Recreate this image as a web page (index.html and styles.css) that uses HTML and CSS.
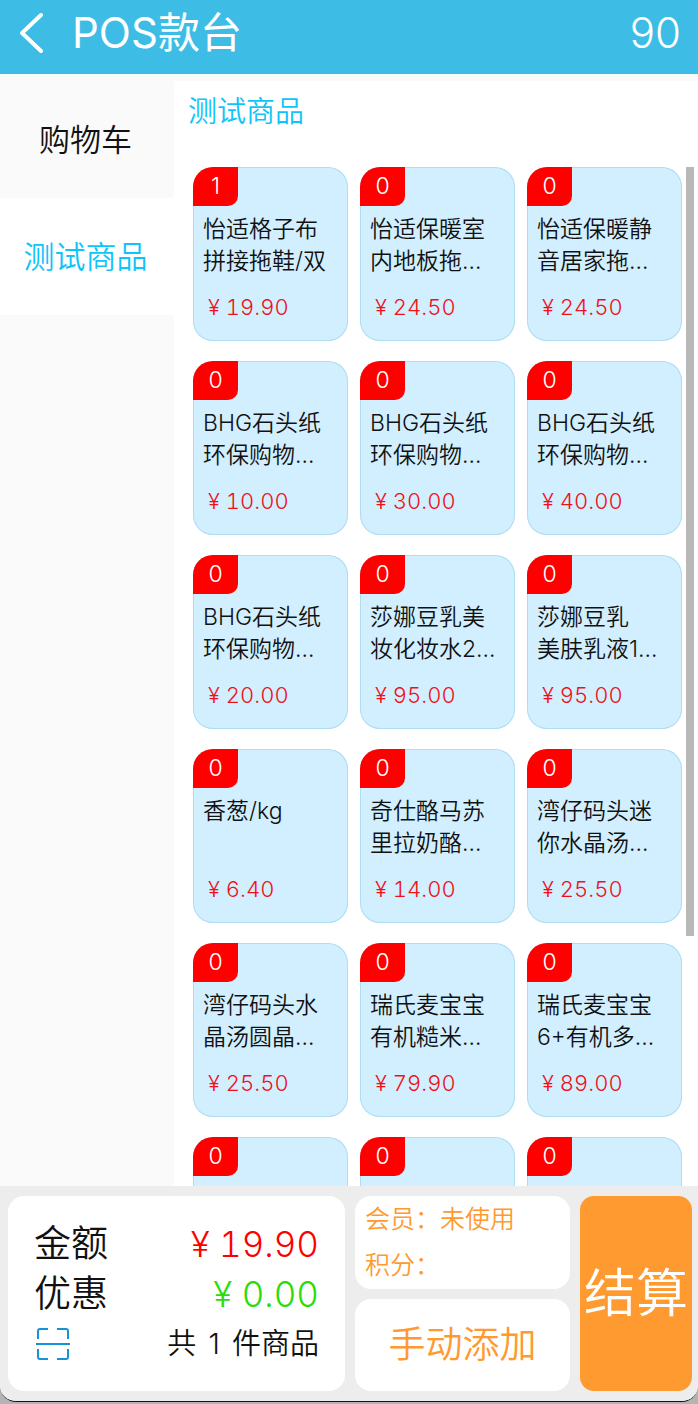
FILE: index.html
```
<!DOCTYPE html>
<html lang="zh-CN">
<head>
    <meta charset="UTF-8">
    <meta name="viewport" content="width=device-width, initial-scale=1.0">
    <title>POS款台</title>
    <link rel="stylesheet" href="styles.css">
</head>
<body>
    <div class="app">
        <header class="header">
            <button class="back-btn" type="button" aria-label="返回">
                <svg width="24" height="42" viewBox="0 0 24 42" fill="none" stroke="#fff" stroke-width="4" stroke-linecap="round">
                    <path d="M21 3 L2 21 L21 39"/>
                </svg>
            </button>
            <h1>POS款台</h1>
            <span class="header-count">90</span>
        </header>

        <div class="content">
            <nav class="sidebar">
                <button class="tab" type="button">购物车</button>
                <button class="tab active" type="button">测试商品</button>
            </nav>

            <main class="goods">
                <h2>测试商品</h2>
                <div class="goods-scroll">
                    <div class="goods-list">
                        <button class="card" type="button">
                            <span class="num">1</span>
                            <span class="name">怡适格子布<br>拼接拖鞋/双</span>
                            <span class="price">¥ 19.90</span>
                        </button>
                        <button class="card" type="button">
                            <span class="num">0</span>
                            <span class="name">怡适保暖室<br>内地板拖…</span>
                            <span class="price">¥ 24.50</span>
                        </button>
                        <button class="card" type="button">
                            <span class="num">0</span>
                            <span class="name">怡适保暖静<br>音居家拖…</span>
                            <span class="price">¥ 24.50</span>
                        </button>
                        <button class="card" type="button">
                            <span class="num">0</span>
                            <span class="name">BHG石头纸<br>环保购物…</span>
                            <span class="price">¥ 10.00</span>
                        </button>
                        <button class="card" type="button">
                            <span class="num">0</span>
                            <span class="name">BHG石头纸<br>环保购物…</span>
                            <span class="price">¥ 30.00</span>
                        </button>
                        <button class="card" type="button">
                            <span class="num">0</span>
                            <span class="name">BHG石头纸<br>环保购物…</span>
                            <span class="price">¥ 40.00</span>
                        </button>
                        <button class="card" type="button">
                            <span class="num">0</span>
                            <span class="name">BHG石头纸<br>环保购物…</span>
                            <span class="price">¥ 20.00</span>
                        </button>
                        <button class="card" type="button">
                            <span class="num">0</span>
                            <span class="name">莎娜豆乳美<br>妆化妆水2…</span>
                            <span class="price">¥ 95.00</span>
                        </button>
                        <button class="card" type="button">
                            <span class="num">0</span>
                            <span class="name">莎娜豆乳<br>美肤乳液1…</span>
                            <span class="price">¥ 95.00</span>
                        </button>
                        <button class="card" type="button">
                            <span class="num">0</span>
                            <span class="name">香葱/kg</span>
                            <span class="price">¥ 6.40</span>
                        </button>
                        <button class="card" type="button">
                            <span class="num">0</span>
                            <span class="name">奇仕酪马苏<br>里拉奶酪…</span>
                            <span class="price">¥ 14.00</span>
                        </button>
                        <button class="card" type="button">
                            <span class="num">0</span>
                            <span class="name">湾仔码头迷<br>你水晶汤…</span>
                            <span class="price">¥ 25.50</span>
                        </button>
                        <button class="card" type="button">
                            <span class="num">0</span>
                            <span class="name">湾仔码头水<br>晶汤圆晶…</span>
                            <span class="price">¥ 25.50</span>
                        </button>
                        <button class="card" type="button">
                            <span class="num">0</span>
                            <span class="name">瑞氏麦宝宝<br>有机糙米…</span>
                            <span class="price">¥ 79.90</span>
                        </button>
                        <button class="card" type="button">
                            <span class="num">0</span>
                            <span class="name">瑞氏麦宝宝<br>6+有机多…</span>
                            <span class="price">¥ 89.00</span>
                        </button>
                        <button class="card" type="button"><span class="num">0</span></button>
                        <button class="card" type="button"><span class="num">0</span></button>
                        <button class="card" type="button"><span class="num">0</span></button>
                    </div>
                    <div class="scroll-thumb"></div>
                </div>
            </main>
        </div>

        <footer class="footer">
            <section class="panel total">
                <div class="row">
                    <span>金额</span>
                    <span class="amount">¥ 19.90</span>
                </div>
                <div class="row">
                    <span>优惠</span>
                    <span class="amount discount">¥ 0.00</span>
                </div>
                <div class="row small">
                    <button class="scan-btn" type="button" aria-label="扫码">
                        <svg width="34" height="34" viewBox="0 0 34 34" fill="none" stroke="#1593d8" stroke-width="2">
                            <path d="M2 12 V4 Q2 2 4 2 H12 M21 2 H30 Q32 2 32 4 V12 M2 22 V30 Q2 32 4 32 H12 M21 32 H30 Q32 32 32 30 V22 M0 17 H34"/>
                        </svg>
                    </button>
                    <span>共 <span class="count">1</span> 件商品</span>
                </div>
            </section>
            <div class="middle">
                <section class="panel member">
                    <p>会员：未使用</p>
                    <p>积分：</p>
                </section>
                <button class="panel add-btn" type="button">手动添加</button>
            </div>
            <button class="pay-btn" type="button">结算</button>
        </footer>
    </div>
</body>
</html>
```
FILE: styles.css
```
:root {
    --blue: #3dbde5;
    --cyan: #10c4fa;
    --orange: #ff9a30;
}

* {
    box-sizing: border-box;
}

body {
    margin: 0;
    height: 100vh;
    padding-bottom: 2px;
    background: #b4b4b4;
    font-family: Inter, "Noto Sans CJK SC", sans-serif;
    font-weight: 350;
    color: #111;
}

button {
    margin: 0;
    padding: 0;
    border: none;
    background: none;
    font: inherit;
    color: inherit;
    cursor: pointer;
}

h1,
h2,
p {
    margin: 0;
    font-weight: inherit;
}

.app {
    height: 100%;
    display: flex;
    flex-direction: column;
    overflow: hidden;
    background: #fafafa;
    border-bottom: 1px solid #111;
    border-radius: 0 0 16px 16px;
}

.header {
    display: flex;
    align-items: center;
    height: 74px;
    padding: 0 17px 8px 20px;
    background: var(--blue);
    color: white;
    font-size: 42px;
    line-height: 42px;
}

.header h1 {
    flex: 1;
    margin-left: 28px;
    font-size: 42px;
    font-weight: 400;
}

.back-btn svg,
.scan-btn svg {
    display: block;
}

.content {
    flex: 1;
    min-height: 0;
    display: flex;
    padding-top: 7px;
}

.sidebar {
    width: 174px;
    display: flex;
    flex-direction: column;
}

.tab {
    height: 117px;
    padding-right: 3px;
    font-size: 31px;
    line-height: 31px;
}

.tab.active {
    background: white;
    color: var(--cyan);
}

.goods {
    flex: 1;
    display: flex;
    flex-direction: column;
    background: white;
}

.goods h2 {
    padding: 0 14px;
    height: 86px;
    line-height: 62px;
    font-size: 29px;
    color: var(--cyan);
}

.goods-scroll {
    flex: 1;
    min-height: 0;
    position: relative;
    overflow: hidden;
    padding: 0 16px 0 19px;
}

.goods-list {
    display: grid;
    grid-template-columns: repeat(3, 1fr);
    grid-auto-rows: 174px;
    gap: 20px 12px;
}

.scroll-thumb {
    position: absolute;
    top: 0;
    right: 4px;
    width: 8px;
    height: 75.5%;
    background: #b8b8b8;
}

.card {
    display: flex;
    flex-direction: column;
    align-items: flex-start;
    overflow: hidden;
    background: #d2efff;
    box-shadow: inset 0 0 0 1px #b0ddf2;
    border-radius: 20px;
    text-align: left;
}

.num {
    width: 45px;
    height: 39px;
    line-height: 39px;
    background: red;
    border-radius: 0 0 10px 0;
    color: white;
    font-size: 23px;
    text-align: center;
}

.name {
    height: 64px;
    margin: 7px 0 0 10px;
    font-size: 23px;
    line-height: 32px;
    white-space: nowrap;
}

.price {
    margin: 14px 0 0 15px;
    font-size: 22px;
    line-height: 32px;
    font-variant-numeric: tabular-nums;
    color: #f01018;
}

.footer {
    display: flex;
    gap: 10px;
    height: 215px;
    padding: 10px 6px 10px 8px;
    background: #ededed;
}

.panel {
    background: white;
    border-radius: 16px;
}

.total {
    flex: 3;
    display: flex;
    flex-direction: column;
    justify-content: center;
    padding: 0 26px;
    font-size: 37px;
}

.row {
    display: flex;
    justify-content: space-between;
    align-items: center;
    line-height: 50px;
}

.row.small {
    font-size: 29px;
}

.scan-btn {
    margin-left: 2px;
}

.count {
    margin: 0 4px;
}

.amount {
    font-size: 35px;
    font-variant-numeric: tabular-nums;
    color: red;
}

.discount {
    color: #2bdc0a;
}

.middle {
    flex: 0 0 215px;
    display: flex;
    flex-direction: column;
    gap: 10px;
    color: var(--orange);
}

.member {
    flex: 1;
    padding: 0 10px;
    font-size: 25px;
    line-height: 46px;
}

.add-btn {
    flex: 1;
    font-size: 37px;
    line-height: 37px;
}

.pay-btn {
    flex: 0 0 112px;
    background: var(--orange);
    border-radius: 14px;
    color: white;
    font-size: 52px;
    line-height: 52px;
}
```
